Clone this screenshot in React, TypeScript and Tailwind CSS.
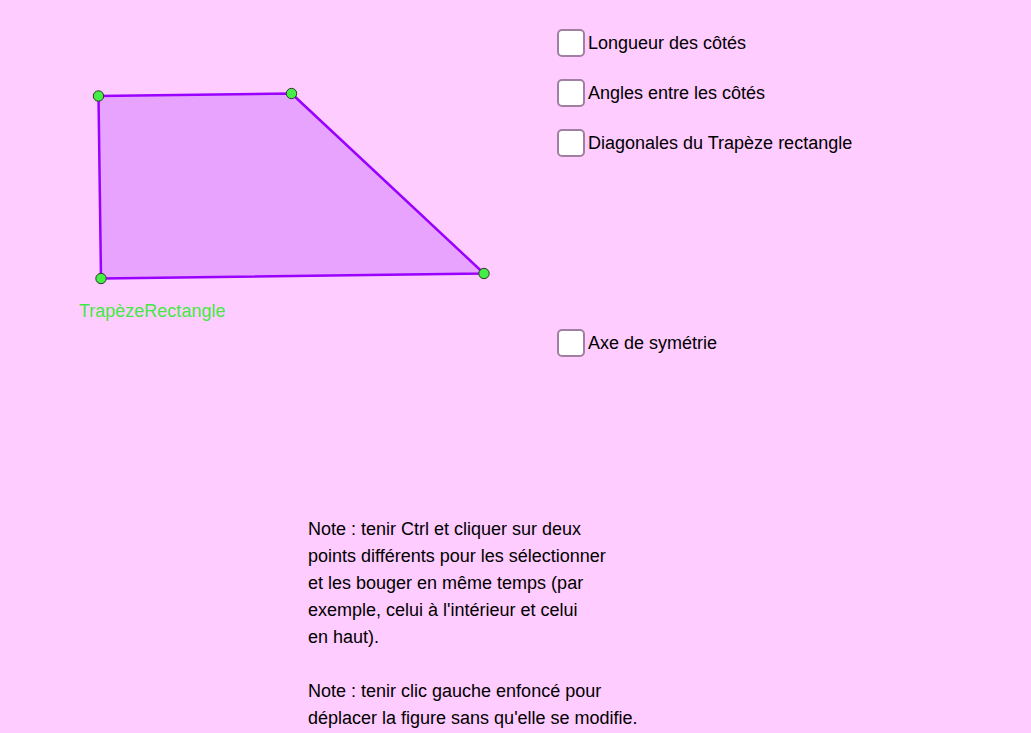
import { useState } from "react";

const options = [
  { id: "longueur", label: "Longueur des côtés" },
  { id: "angles", label: "Angles entre les côtés" },
  { id: "diagonales", label: "Diagonales du Trapèze rectangle" },
];

const pts = [
  { x: 98.5, y: 96 },
  { x: 291.5, y: 93.5 },
  { x: 484, y: 273.5 },
  { x: 101, y: 278.5 },
];

function Check({
  label,
  checked,
  onToggle,
}: {
  label: string;
  checked: boolean;
  onToggle: () => void;
}) {
  return (
    <label className="flex items-center h-[28px] cursor-pointer select-none">
      <span
        onClick={onToggle}
        className="w-[28px] h-[28px] rounded-[5px] border-2 border-[#a080a0] bg-white flex items-center justify-center"
      >
        {checked && (
          <svg viewBox="0 0 16 16" className="w-4 h-4">
            <path d="M3 8.5l3.2 3.2L13 4.5" fill="none" stroke="#333" strokeWidth={2} />
          </svg>
        )}
      </span>
      <span className="ml-[3px] text-[18px] text-black leading-none">{label}</span>
    </label>
  );
}

export default function App() {
  const [state, setState] = useState<Record<string, boolean>>({});
  const toggle = (id: string) => setState((s) => ({ ...s, [id]: !s[id] }));
  const poly = pts.map((p) => `${p.x},${p.y}`).join(" ");

  return (
    <div
      className="relative w-full h-[733px] bg-[#ffccff] overflow-hidden"
      style={{ fontFamily: '"Liberation Sans", Arial, sans-serif' }}
    >
      <svg className="absolute inset-0" width={1031} height={733} viewBox="0 0 1031 733">
        <polygon points={poly} fill="#e8a3ff" stroke="#9900ff" strokeWidth={2.5} strokeLinejoin="round" />
        {pts.map((p, i) => (
          <circle key={i} cx={p.x} cy={p.y} r={5.2} fill="#44ee44" stroke="#333" strokeWidth={1} />
        ))}
        <text x={79} y={316.5} fill="#44e844" fontSize={18} fontFamily='"Liberation Sans", Arial, sans-serif'>
          TrapèzeRectangle
        </text>
      </svg>

      <div className="relative flex flex-col">
        <div className="ml-[557px] pt-[29px] flex flex-col gap-[22px]">
          {options.map((o) => (
            <Check key={o.id} label={o.label} checked={!!state[o.id]} onToggle={() => toggle(o.id)} />
          ))}
          <div className="mt-[150px]">
            <Check label="Axe de symétrie" checked={!!state.axe} onToggle={() => toggle("axe")} />
          </div>
        </div>

        <div className="ml-[308px] mt-[159px] text-[18px] leading-[27px] text-black">
          <p>
            Note : tenir Ctrl et cliquer sur deux
            <br />
            points différents pour les sélectionner
            <br />
            et les bouger en même temps (par
            <br />
            exemple, celui à l'intérieur et celui
            <br />
            en haut).
          </p>
          <p className="mt-[27px]">
            Note : tenir clic gauche enfoncé pour
            <br />
            déplacer la figure sans qu'elle se modifie.
          </p>
        </div>
      </div>
    </div>
  );
}
